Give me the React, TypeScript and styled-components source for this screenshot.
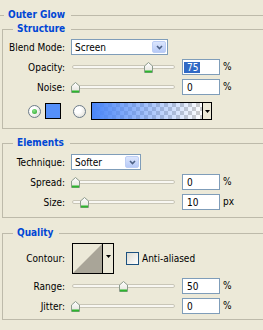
import styled, { createGlobalStyle } from 'styled-components'

const GlobalStyle = createGlobalStyle`
  html, body {
    margin: 0;
    padding: 0;
    background: #ECE9D8;
  }

  body {
    color: #000;
    font-family: "DejaVu Sans Condensed", "DejaVu Sans", "Liberation Sans", sans-serif;
    font-size: 10px;
    overflow: hidden;
  }
`

const LINE = '#BDBAAA'
const BLUE_TITLE = '#0046D5'
const FIELD_BORDER = '#7F9DB9'

const Panel = styled.div`
  box-sizing: border-box;
  height: 330px;
  overflow: hidden;
  padding-top: 8px;
  width: 263px;
`

const Header = styled.div`
  align-items: center;
  display: flex;
  height: 14px;
  width: 300px;
`

const Rule = styled.span<{ $w?: number }>`
  background: ${LINE};
  flex: ${p => (p.$w ? `0 0 ${p.$w}px` : '1')};
  height: 1px;
`

const Title = styled.span`
  color: ${BLUE_TITLE};
  font-weight: bold;
  line-height: 14px;
  margin: 0 6px 0 4px;
`

const Group = styled.fieldset<{ $pt: number, $pb: number, $mt: number }>`
  border: 1px solid ${LINE};
  box-sizing: border-box;
  display: flex;
  flex-direction: column;
  gap: 4px;
  margin: ${p => p.$mt}px 0 0 2px;
  min-width: 0;
  padding: ${p => p.$pt}px 0 ${p => p.$pb}px 0;
  width: 300px;
`

const Legend = styled.legend`
  color: ${BLUE_TITLE};
  font-weight: bold;
  line-height: 14px;
  margin-left: 10px;
  padding: 0 6px 0 4px;
`

const Row = styled.div<{ $h?: number }>`
  align-items: center;
  display: flex;
  height: ${p => p.$h ?? 16}px;
`

const Label = styled.label`
  flex: none;
  margin-right: 6px;
  text-align: right;
  white-space: nowrap;
  width: 62px;
`

const Select = styled.div<{ $w: number }>`
  align-items: center;
  background: #fff;
  border: 1px solid ${FIELD_BORDER};
  box-sizing: border-box;
  display: flex;
  height: 16px;
  padding-left: 3px;
  width: ${p => p.$w}px;
`

const SelectText = styled.span`
  flex: 1;
`

const DropButton = styled.span`
  align-items: center;
  background: linear-gradient(#DCE6FD, #B7CAF7);
  border: 1px solid #BDCEF5;
  border-radius: 2px;
  box-sizing: border-box;
  display: flex;
  height: 12px;
  justify-content: center;
  margin-right: 1px;
  width: 14px;
`

const Slider = styled.div`
  align-items: center;
  display: flex;
  flex: none;
  height: 16px;
  padding: 0 1px;
  position: relative;
  width: 103px;
`

const Track = styled.div`
  background: #F8F7F2;
  border: 1px solid #C9C6B7;
  border-radius: 2px;
  flex: 1;
  height: 2px;
`

const Thumb = styled.svg`
  left: 0;
  position: absolute;
  top: 3px;
`

const NumberBox = styled.div`
  align-items: center;
  background: #fff;
  border: 1px solid ${FIELD_BORDER};
  box-sizing: border-box;
  display: flex;
  height: 16px;
  margin-left: 6px;
  padding-left: 1px;
  width: 38px;
`

const Value = styled.span<{ $selected?: boolean }>`
  background: ${p => (p.$selected ? '#316AC5' : 'transparent')};
  color: ${p => (p.$selected ? '#fff' : '#000')};
  display: inline-block;
  line-height: 11px;
  padding: 0 2px 0 3px;
`

const Unit = styled.span`
  margin-left: 3px;
  margin-top: -2px;
`

const ColorRow = styled(Row)`
  margin-top: 3px;
`

const Radio = styled.span<{ $checked?: boolean, $ml: number }>`
  align-items: center;
  background: radial-gradient(circle at 35% 35%, #fff 30%, #D8D7CE);
  border: 1px solid #6D7C8A;
  border-radius: 50%;
  box-sizing: border-box;
  display: flex;
  flex: none;
  height: 13px;
  justify-content: center;
  margin-left: ${p => p.$ml}px;
  width: 13px;

  &::after {
    background: radial-gradient(circle at 40% 35%, #8AE38A, #21A121);
    border-radius: 50%;
    content: '';
    display: ${p => (p.$checked ? 'block' : 'none')};
    height: 5px;
    width: 5px;
  }
`

const Swatch = styled.span`
  background: #5590FA;
  border: 1px solid #000;
  box-sizing: border-box;
  flex: none;
  height: 16px;
  margin-left: 4px;
  width: 16px;
`

const GradientPicker = styled.div`
  border: 1px solid #000;
  box-sizing: border-box;
  display: flex;
  flex: none;
  height: 18px;
  margin-left: 5px;
  width: 121px;
`

const GradientFill = styled.span`
  background:
    linear-gradient(to right, #4A86F8, rgba(74, 134, 248, 0)),
    conic-gradient(#fff 25%, #CDCDCD 0 50%, #fff 0 75%, #CDCDCD 0) 0 0 / 8px 8px;
  flex: 1;
`

const ArrowCell = styled.span<{ $w: number, $top?: number }>`
  align-items: ${p => (p.$top !== undefined ? 'flex-start' : 'center')};
  background: #ECE9D8;
  border-left: 1px solid #000;
  box-sizing: border-box;
  display: flex;
  flex: none;
  justify-content: center;
  padding-top: ${p => p.$top ?? 0}px;
  width: ${p => p.$w}px;
`

const ContourPicker = styled.div`
  border: 1px solid #000;
  box-sizing: border-box;
  display: flex;
  flex: none;
  height: 31px;
  margin-left: 1px;
  width: 42px;
`

const ContourPreview = styled.svg`
  background: #ECE9D8;
  display: block;
  flex: 1;
`

const Checkbox = styled.span`
  background: linear-gradient(135deg, #DCDBD3, #fff);
  border: 1px solid #1C5180;
  box-sizing: border-box;
  flex: none;
  height: 13px;
  margin-left: 12px;
  width: 13px;
`

const CheckLabel = styled.span`
  margin-left: 3px;
`

function Chevron () {
  return (
    <svg width='7' height='5' viewBox='0 0 7 5'>
      <path d='M1 1 L3.5 3.5 L6 1' fill='none' stroke='#4D6185' strokeWidth='1.6' />
    </svg>
  )
}

function DownArrow () {
  return (
    <svg width='5' height='3' viewBox='0 0 5 3'>
      <path d='M0 0 H5 L2.5 3 Z' fill='#000' />
    </svg>
  )
}

function Combo ({ label, value, width }: { label: string, value: string, width: number }) {
  return (
    <Row>
      <Label>{label}</Label>
      <Select $w={width}>
        <SelectText>{value}</SelectText>
        <DropButton><Chevron /></DropButton>
      </Select>
    </Row>
  )
}

function SliderRow ({ label, value, pct, unit, selected }: { label: string, value: string, pct: number, unit: string, selected?: boolean }) {
  return (
    <Row>
      <Label>{label}</Label>
      <Slider>
        <Track />
        <Thumb width='9' height='11' viewBox='0 0 9 11' style={{ left: Math.round(pct * 0.96) }}>
          <defs>
            <linearGradient id='thumbFill' x1='0' y1='0' x2='0' y2='1'>
              <stop offset='0' stopColor='#fff' />
              <stop offset='1' stopColor='#E4E3DB' />
            </linearGradient>
          </defs>
          <path d='M0.5 10.5 V4 L4.5 0.5 L8.5 4 V10.5 Z' fill='url(#thumbFill)' stroke='#8C9A8C' />
          <rect x='1' y='8.5' width='7' height='2' fill='#2DB52D' />
        </Thumb>
      </Slider>
      <NumberBox>
        <Value $selected={selected}>{value}</Value>
      </NumberBox>
      <Unit>{unit}</Unit>
    </Row>
  )
}

export default function App () {
  return (
    <>
      <GlobalStyle />
      <Panel>
        <Header>
          <Rule $w={4} />
          <Title>Outer Glow</Title>
          <Rule />
        </Header>

        <Group $mt={0} $pt={3} $pb={8}>
          <Legend>Structure</Legend>
          <Combo label='Blend Mode:' value='Screen' width={97} />
          <SliderRow label='Opacity:' value='75' pct={76} unit='%' selected />
          <SliderRow label='Noise:' value='0' pct={0} unit='%' />
          <ColorRow $h={18}>
            <Radio $ml={25} $checked />
            <Swatch />
            <Radio $ml={12} />
            <GradientPicker>
              <GradientFill />
              <ArrowCell $w={9}><DownArrow /></ArrowCell>
            </GradientPicker>
          </ColorRow>
        </Group>

        <Group $mt={7} $pt={4} $pb={7}>
          <Legend>Elements</Legend>
          <Combo label='Technique:' value='Softer' width={70} />
          <SliderRow label='Spread:' value='0' pct={0} unit='%' />
          <SliderRow label='Size:' value='10' pct={9.5} unit='px' />
        </Group>

        <Group $mt={8} $pt={3} $pb={5}>
          <Legend>Quality</Legend>
          <Row $h={31}>
            <Label>Contour:</Label>
            <ContourPicker>
              <ContourPreview viewBox='0 0 28 29' preserveAspectRatio='none'>
                <polygon points='0,29 28,0 28,29' fill='#A9A598' />
              </ContourPreview>
              <ArrowCell $w={11} $top={11}><DownArrow /></ArrowCell>
            </ContourPicker>
            <Checkbox />
            <CheckLabel>Anti-aliased</CheckLabel>
          </Row>
          <SliderRow label='Range:' value='50' pct={50} unit='%' />
          <SliderRow label='Jitter:' value='0' pct={0} unit='%' />
        </Group>
      </Panel>
    </>
  )
}
